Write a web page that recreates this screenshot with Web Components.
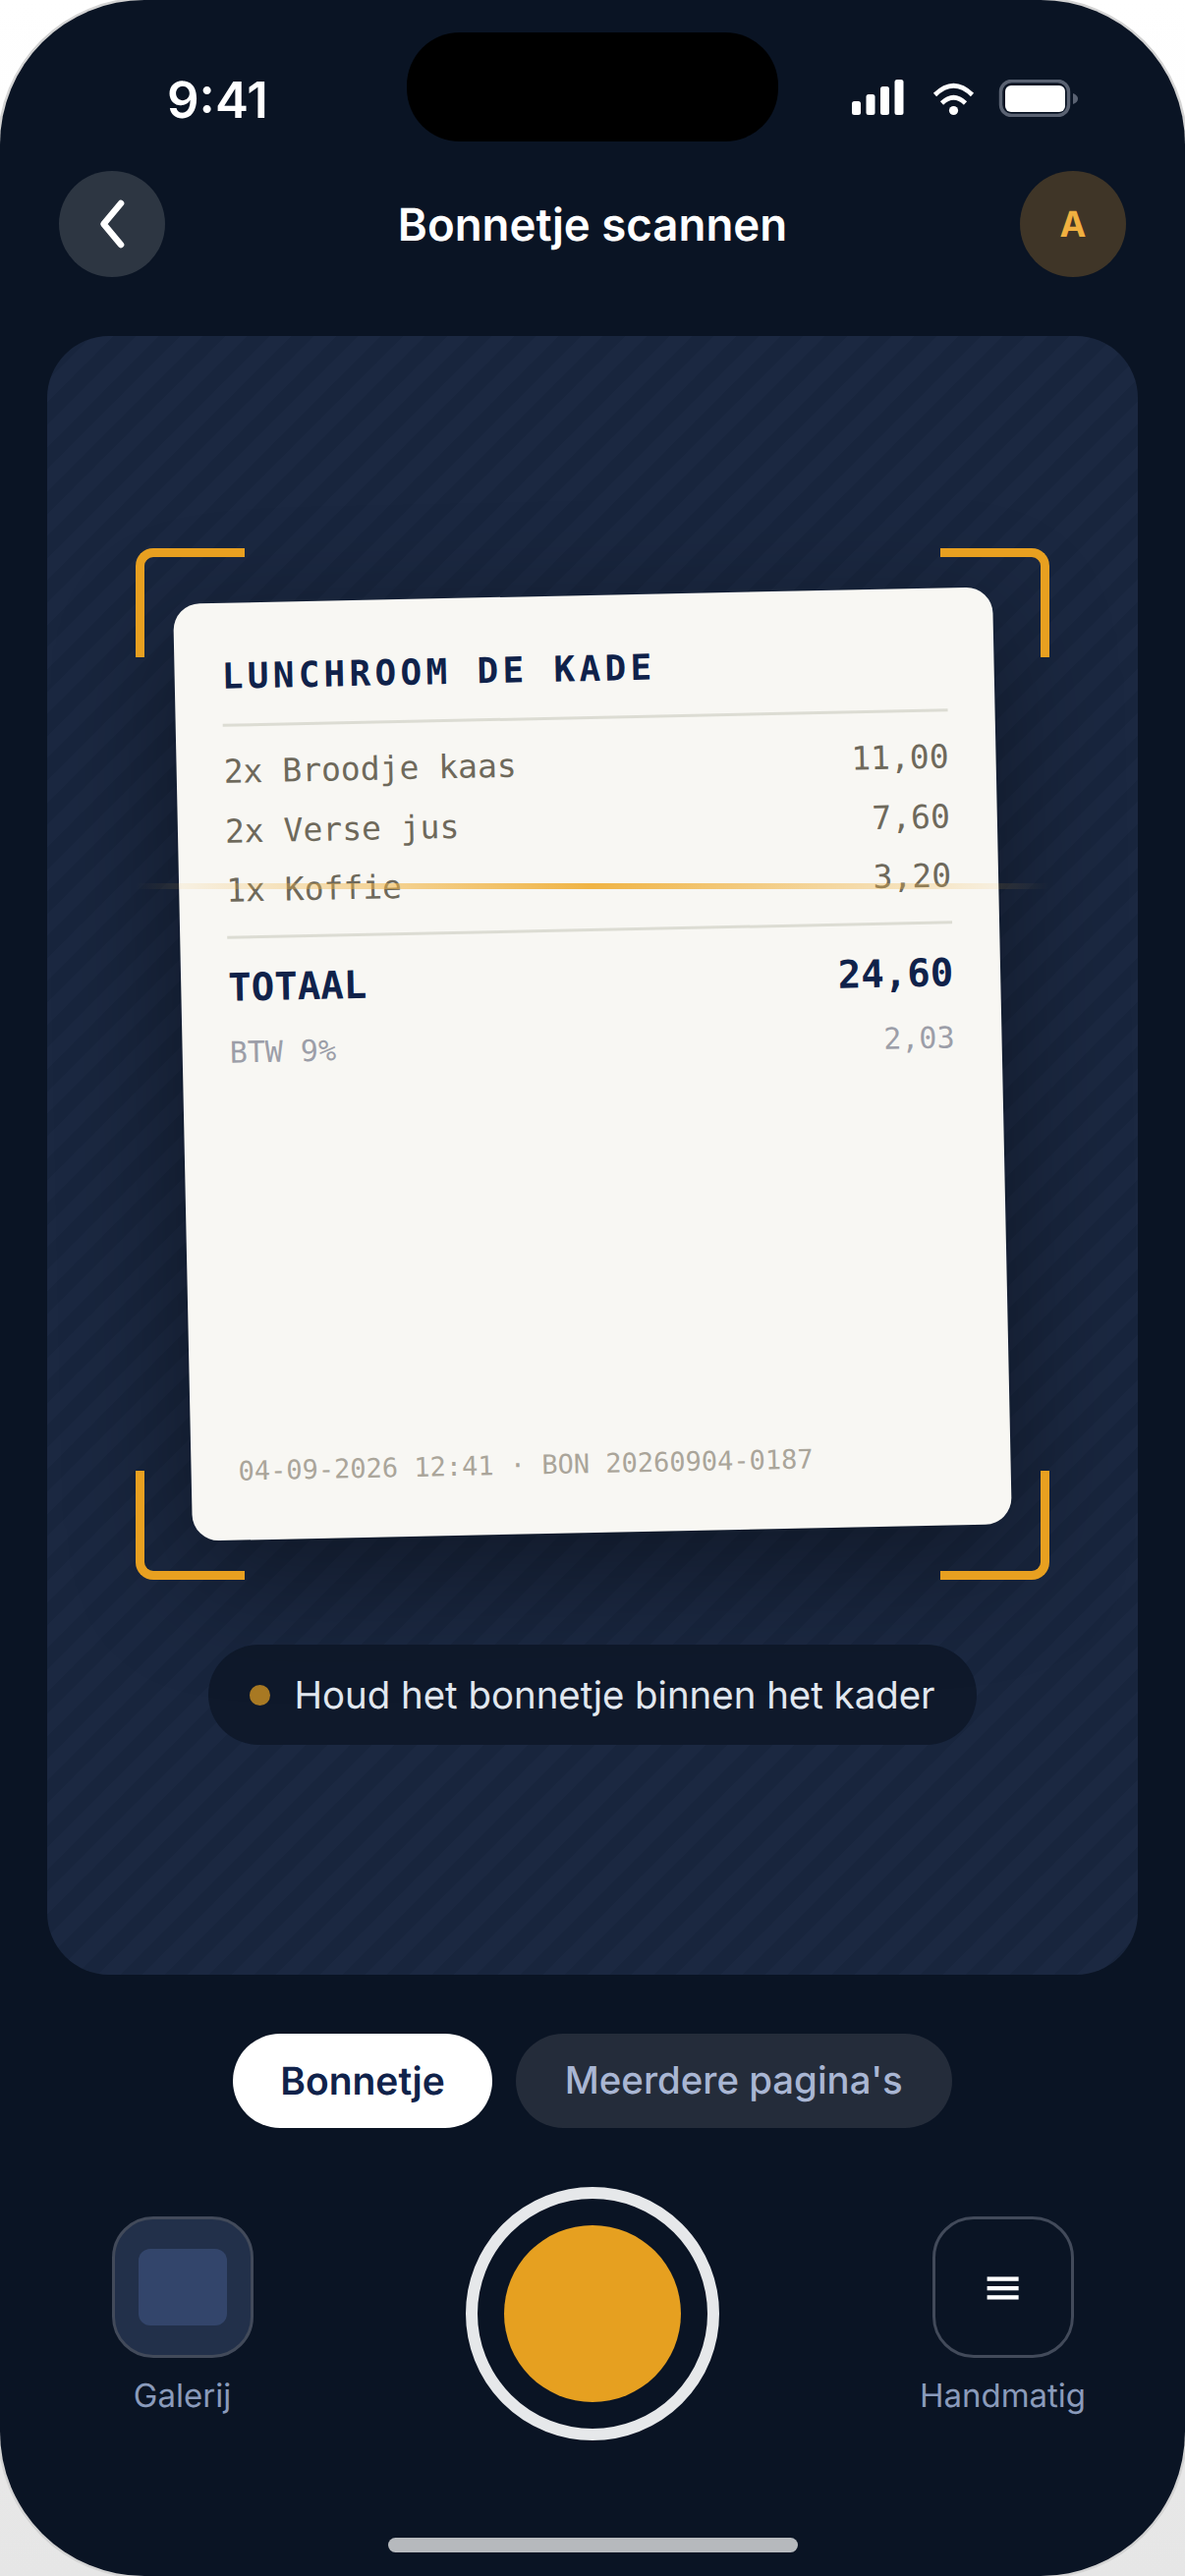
<!DOCTYPE html>
<html lang="nl">
<head>
<meta charset="utf-8">
<title>Bonnetje scannen</title>
<style>
html,body{margin:0;padding:0;width:1206px;height:2622px;overflow:hidden;background:#fff}
scan-app{text-rendering:geometricPrecision}
</style>
</head>
<body>
<scan-app></scan-app>
<script>
function def(name, css, html){
  customElements.define(name, class extends HTMLElement{
    constructor(){
      super();
      const r=this.attachShadow({mode:'open'});
      r.innerHTML='<style>'+css+'</style>'+html;
    }
  });
}
def('status-bar',`
:host{display:flex;height:174px;box-sizing:border-box;padding:0 109px 0 170px;position:relative;justify-content:space-between}
.time{font:600 51px/1 Inter,sans-serif;color:#fff;margin-top:77px;letter-spacing:0}
.island{position:absolute;left:414px;top:33px;width:378px;height:111px;border-radius:54px;background:#000}
svg{display:block;margin-top:81px}
`,`<span class="time">9:41</span><div class="island"></div>
<svg width="230" height="38" viewBox="867 81 230 38">
<rect x="867" y="103" width="9" height="14" rx="2.5" fill="#fff"/>
<rect x="881.5" y="96" width="9" height="21" rx="2.5" fill="#fff"/>
<rect x="896" y="88" width="9" height="29" rx="2.5" fill="#fff"/>
<rect x="910.5" y="81" width="9" height="36" rx="2.5" fill="#fff"/>
<path d="M951.5 96.5Q970.5 78 989.5 96.5" fill="none" stroke="#fff" stroke-width="4.6"/>
<path d="M958.5 105Q970.5 93.5 982.5 105" fill="none" stroke="#fff" stroke-width="4.6"/>
<circle cx="970.5" cy="112.5" r="4.6" fill="#fff"/>
<rect x="1018.5" y="82.5" width="69" height="35" rx="11" fill="none" stroke="#5a6272" stroke-width="3.5"/>
<rect x="1023" y="87" width="61" height="27" rx="6" fill="#fff"/>
<path d="M1092 95Q1097 97 1097 100.5Q1097 104 1092 106Z" fill="#5a6272"/>
</svg>`);

def('top-bar',`
:host{display:flex;align-items:center;justify-content:space-between;height:108px;padding:0 60px;margin-bottom:60px}
.c{width:108px;height:108px;border-radius:50%;display:flex;align-items:center;justify-content:center}
.back{background:#2d3642}
.av{background:#3f3527;color:#f0b040;font:700 36px/1 Inter,sans-serif}
h1{margin:0;padding-top:2px;font:600 45.6px/1 Inter,sans-serif;color:#fff}
svg{display:block}
`,`<div class="c back"><svg width="108" height="108" viewBox="60 174 108 108"><path d="M123 207L105.500 228L123 249" fill="none" stroke="#fff" stroke-width="6.600" stroke-linecap="round" stroke-linejoin="round"/></svg></div>
<h1>Bonnetje scannen</h1>
<div class="c av">A</div>`);

def('paper-receipt',`
:host{display:flex;flex-direction:column;box-sizing:border-box;width:834px;height:954px;background:#f8f7f3;border-radius:27px;padding:52px 48px 53px;transform:rotate(-1.2deg);box-shadow:0 36px 120px rgba(0,0,0,.38);font-family:"DejaVu Sans Mono",monospace;color:#6e695b}
.title{font-weight:700;font-size:36px;line-height:48px;letter-spacing:4.32px;color:#10224a;margin-bottom:23px}
hr{border:0;height:3px;background:#dcdcd3;margin:0}
.row{display:flex;justify-content:space-between;font-size:33px;line-height:42px}
.items{margin-top:25px;display:flex;flex-direction:column;gap:18.500px;margin-bottom:25px}
.total{display:flex;justify-content:space-between;margin-top:26.500px;font-weight:700;font-size:39px;line-height:48px;color:#10224a}
.vat{display:flex;justify-content:space-between;margin-top:24.500px;font-size:30px;line-height:36px;color:#9c9ea8}
.foot{margin-top:auto;font-size:27px;line-height:33px;color:#aaa59a}
`,`<div class="title">LUNCHROOM DE KADE</div><hr>
<div class="items">
<div class="row"><span>2x Broodje kaas</span><span>11,00</span></div>
<div class="row"><span>2x Verse jus</span><span>7,60</span></div>
<div class="row"><span>1x Koffie</span><span>3,20</span></div>
</div><hr>
<div class="total"><span>TOTAAL</span><span>24,60</span></div>
<div class="vat"><span>BTW 9%</span><span>2,03</span></div>
<div class="foot">04-09-2026 12:41 · BON 20260904-0187</div>`);

def('scan-frame',`
:host{display:flex;align-items:center;justify-content:center;position:relative;width:930px;height:1050px;flex:none}
.k{position:absolute;width:111px;height:111px;box-sizing:border-box;border:0 solid #e8a020}
.tl{left:0;top:0;border-width:9px 0 0 9px;border-top-left-radius:18px}
.tr{right:0;top:0;border-width:9px 9px 0 0;border-top-right-radius:18px}
.bl{left:0;bottom:0;border-width:0 0 9px 9px;border-bottom-left-radius:18px}
.br{right:0;bottom:0;border-width:0 9px 9px 0;border-bottom-right-radius:18px}
.line{position:absolute;left:0;right:0;top:341px;height:6px;background:linear-gradient(90deg,rgba(240,180,70,0),#f0b444 50%,rgba(240,180,70,0))}
`,`<slot></slot><i class="k tl"></i><i class="k tr"></i><i class="k bl"></i><i class="k br"></i><div class="line"></div>`);

def('hint-pill',`
:host{display:flex;align-items:center;box-sizing:border-box;height:102px;padding:0 42px;gap:24px;border-radius:51px;background:#0f192b;color:#e2e8f0;font:400 38.4px/1 Inter,sans-serif;white-space:nowrap}
i{width:21px;height:21px;border-radius:50%;background:#a97a24;flex:none}
span{padding-top:2px}
`,`<i></i><span><slot></slot></span>`);

def('view-finder',`
:host{display:flex;flex-direction:column;align-items:center;box-sizing:border-box;height:1668px;margin:0 48px;padding-top:216px;gap:66px;border-radius:63px;overflow:hidden;background:repeating-linear-gradient(135deg,#1b2841 0 16px,#18253d 16px 32px)}
`,`<slot></slot>`);

def('mode-tabs',`
:host{display:flex;justify-content:center;gap:24px;margin-top:60px}
`,`<slot></slot>`);
def('mode-tab',`
:host{display:flex;align-items:center;height:96px;padding:0 50px;border-radius:48px;background:#242c3a;color:#a9b6d3;font:500 38.4px/1 Inter,sans-serif;white-space:nowrap}
:host([active]){background:#fff;color:#10224a;font:600 39px/1 Inter,sans-serif;padding:0 48px}
`,`<slot></slot>`);

def('side-action',`
:host{display:flex;flex-direction:column;align-items:center;align-self:start;margin-top:30px;gap:18px;color:#8a9bbb;font:400 33px/40px Inter,sans-serif;white-space:nowrap}
.b{width:144px;height:144px;box-sizing:border-box;border:3px solid #424a5a;border-radius:42px;display:flex;align-items:center;justify-content:center;color:#fff;font:400 51px/1 "DejaVu Sans",sans-serif}
:host([filled]) .b{background:#22304a}
`,`<div class="b"><slot name="icon"></slot></div><slot></slot>`);

def('shutter-button',`
:host{display:flex;align-items:center;justify-content:center;box-sizing:border-box;width:258px;height:258px;border:12px solid #e6e8ea;border-radius:50%;justify-self:center}
i{width:180px;height:180px;border-radius:50%;background:#e6a020}
`,`<i></i>`);

def('control-row',`
:host{display:grid;grid-template-columns:171px 1fr 171px;align-items:center;padding:0 100px;margin-top:60px}
`,`<slot></slot>`);

def('scan-app',`
:host{display:block;width:1206px;height:2622px;background:linear-gradient(180deg,#fff,#e6e6e6)}
.screen{position:relative;box-sizing:border-box;width:1206px;height:2622px;background:#0a1424;border-radius:147px;box-shadow:0 0 0 2.500px #d3d3d3;overflow:hidden;display:flex;flex-direction:column}
.home{width:417px;height:15px;border-radius:8px;background:#b6b9bd;margin:auto auto 24px}
.thumb{display:block;width:90px;height:78px;border-radius:12px;background:#33456b}
`,`<div class="screen">
<status-bar></status-bar>
<top-bar></top-bar>
<view-finder>
  <scan-frame><paper-receipt></paper-receipt></scan-frame>
  <hint-pill>Houd het bonnetje binnen het kader</hint-pill>
</view-finder>
<mode-tabs><mode-tab active>Bonnetje</mode-tab><mode-tab>Meerdere pagina's</mode-tab></mode-tabs>
<control-row>
  <side-action filled><span class="thumb" slot="icon"></span>Galerij</side-action>
  <shutter-button></shutter-button>
  <side-action><span slot="icon">≡</span>Handmatig</side-action>
</control-row>
<div class="home"></div>
</div>`);
</script>
</body>
</html>
